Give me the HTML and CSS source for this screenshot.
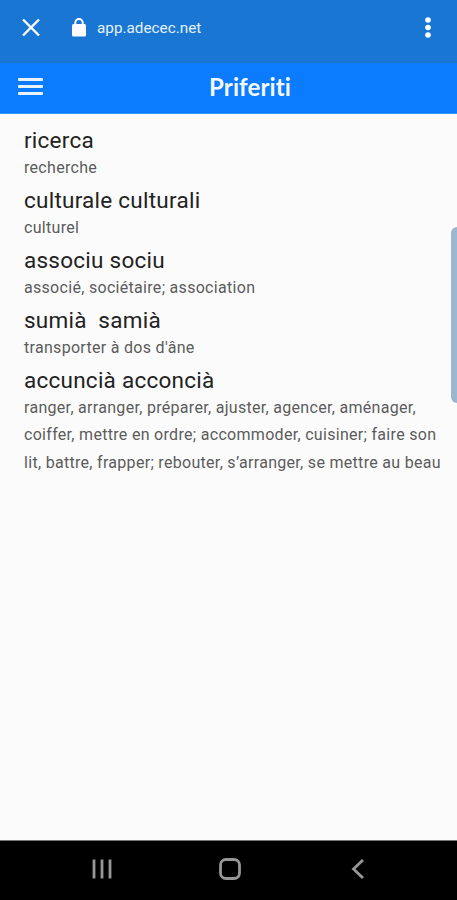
FILE: index.html
```html
<!DOCTYPE html>
<html lang="co">
  <head>
    <meta charset="utf-8">
    <title>Priferiti</title>
    <link rel="stylesheet" href="styles.css">
  </head>
  <body>
    <div class="browser-bar">
      <svg class="close" width="20" height="20" viewBox="0 0 20 20">
        <path d="M2 1.500L18 17.500M18 1.500L2 17.500" />
      </svg>
      <svg class="lock" width="16" height="20" viewBox="0 0 16 20">
        <rect x="1" y="6" width="14" height="12.5" rx="1.5" />
        <path d="M4.3 7V4.800a3.7 3.7 0 0 1 7.4 0V7" />
      </svg>
      <span class="url">app.adecec.net</span>
      <svg class="more" width="8" height="24" viewBox="0 0 8 24">
        <circle cx="4" cy="4" r="2.8" />
        <circle cx="4" cy="11.500" r="2.8" />
        <circle cx="4" cy="19" r="2.8" />
      </svg>
    </div>

    <header class="app-bar">
      <div class="menu">
        <span></span>
        <span></span>
        <span></span>
      </div>
      <h1>Priferiti</h1>
    </header>

    <main class="words">
      <h2>ricerca</h2>
      <p>recherche</p>
      <h2>culturale culturali</h2>
      <p>culturel</p>
      <h2>associu sociu</h2>
      <p>associé, sociétaire; association</p>
      <h2>sumià&nbsp; samià</h2>
      <p>transporter à dos d'âne</p>
      <h2>accuncià acconcià</h2>
      <p>
        ranger, arranger, préparer, ajuster, agencer, aménager,<br>
        coiffer, mettre en ordre; accommoder, cuisiner; faire son<br>
        lit, battre, frapper; rebouter, s’arranger, se mettre au beau
      </p>
    </main>

    <div class="edge-handle"></div>

    <nav class="nav-bar">
      <svg width="22" height="22" viewBox="0 0 22 22">
        <path d="M3 1.5V20.5M11 1.5V20.5M19 1.5V20.5" />
      </svg>
      <svg width="22" height="22" viewBox="0 0 22 22">
        <rect x="1.5" y="1.5" width="19" height="19" rx="5.5" />
      </svg>
      <svg width="22" height="22" viewBox="0 0 22 22">
        <path d="M16 2L6.500 11L16 20" />
      </svg>
    </nav>
  </body>
</html>
```

FILE: styles.css
```css
* {
  box-sizing: border-box;
}
body {
  margin: 0;
  height: 900px;
  display: flex;
  flex-direction: column;
  overflow: hidden;
  background-color: #fbfbfb;
  font-family: Roboto, sans-serif;
}
.browser-bar {
  height: 63px;
  padding: 0 25px 8px 21px;
  display: flex;
  align-items: center;
  background-color: #1976d2;
  color: #e4f0fc;
}
.close {
  fill: none;
  stroke: white;
  stroke-width: 2.4;
}
.lock {
  margin-left: 30px;
  fill: white;
}
.lock path {
  fill: none;
  stroke: white;
  stroke-width: 2;
}
.url {
  margin-left: 10px;
  padding-top: 1px;
  font-size: 15.3px;
}
.more {
  margin-left: auto;
  fill: white;
}
.app-bar {
  height: 51px;
  padding-left: 18px;
  display: flex;
  align-items: center;
  background-color: #0b7bff;
  border-bottom: 1px solid #3b93fb;
}
.menu {
  width: 25px;
  display: flex;
  flex-direction: column;
  gap: 4px;
  margin-top: -3px;
}
.menu span {
  height: 3px;
  border-radius: 1px;
  background-color: #e8f3ff;
}
h1 {
  flex: 1;
  margin: 0;
  padding-bottom: 3px;
  text-align: center;
  font-family: Lato, sans-serif;
  font-size: 24px;
  font-weight: 700;
  letter-spacing: 0.1px;
  font-variant-ligatures: none;
  color: #f4f9ff;
}
.words {
  flex: 1;
  padding: 14px 0 0 24px;
  white-space: nowrap;
}
h2 {
  margin: 0 0 2px;
  font-size: 22.5px;
  font-weight: 400;
  line-height: 24px;
  letter-spacing: 0.25px;
  color: #222;
}
.words p {
  margin: 0 0 6.4px;
  font-size: 16px;
  line-height: 27.5px;
  letter-spacing: 0.3px;
  color: #5c5c5c;
}
.edge-handle {
  position: absolute;
  top: 227px;
  right: 0;
  width: 6px;
  height: 176px;
  border-radius: 6px 0 0 6px;
  background-color: #9bb6d1;
}
.nav-bar {
  height: 60px;
  padding: 0 88px 3px 91px;
  display: flex;
  align-items: center;
  justify-content: space-between;
  background-color: black;
  border-top: 1px solid #777;
}
.nav-bar svg {
  fill: none;
  stroke: #979797;
  stroke-width: 2.8;
}
```
